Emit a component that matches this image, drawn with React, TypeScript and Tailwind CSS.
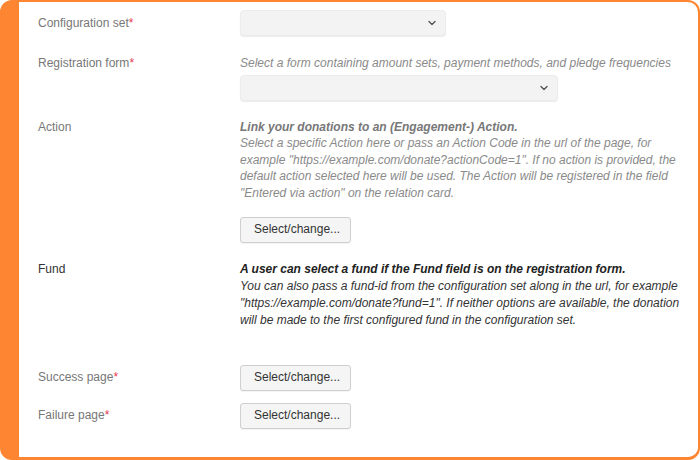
const Req = () => <span className="text-[#e8394f]">*</span>;

const Chevron = () => (
  <svg width="10" height="10" viewBox="0 0 10 10" fill="none" stroke="#555" strokeWidth="1.4" strokeLinecap="round" strokeLinejoin="round">
    <path d="M2 3.5 5 6.5 8 3.5" />
  </svg>
);

const Select = ({ width }: { width: string }) => (
  <div className={`${width} h-[26px] flex items-center justify-end pr-[8px] bg-[#f3f3f3] border border-[#ececec] rounded-[4px] shadow-[0_1px_1px_rgba(0,0,0,0.08)]`}>
    <Chevron />
  </div>
);

const Button = () => (
  <button className="w-[111px] h-[26px] bg-[#f5f5f5] border border-[#cfcfcf] rounded-[3px] text-[12px] text-[#333] text-left pl-[13px] shadow-[0_1px_1px_rgba(0,0,0,0.05)]">
    Select/change...
  </button>
);

const App = () => {
  return (
    <div className="w-[700px] h-[460px] bg-white" style={{ fontFamily: '"Liberation Sans", Arial, sans-serif' }}>
      <div className="h-full border-2 border-b-[3px] border-l-[19px] border-[#fe8632] rounded-[12px] bg-white pl-[19px] pr-[12px] pt-[8px] text-[12px] leading-[16.6px]">
        {/* Configuration set */}
        <div className="grid grid-cols-[202px_1fr] items-center">
          <div className="text-[#777]">Configuration set<Req /></div>
          <Select width="w-[206px]" />
        </div>

        {/* Registration form */}
        <div className="grid grid-cols-[202px_1fr] mt-[19px]">
          <div className="text-[#777]">Registration form<Req /></div>
          <div>
            <div className="italic text-[#8a8a8a]">Select a form containing amount sets, payment methods, and pledge frequencies</div>
            <div className="mt-[3px]">
              <Select width="w-[318px]" />
            </div>
          </div>
        </div>

        {/* Action */}
        <div className="grid grid-cols-[202px_1fr] mt-[18px]">
          <div className="text-[#777]">Action</div>
          <div>
            <div className="italic font-bold text-[#777]">Link your donations to an (Engagement-) Action.</div>
            <div className="italic text-[#8a8a8a]">
              Select a specific Action here or pass an Action Code in the url of the page, for example "https://example.com/donate?actionCode=1". If no action is provided, the default action selected here will be used. The Action will be registered in the field "Entered via action" on the relation card.
            </div>
            <div className="mt-[15px]">
              <Button />
            </div>
          </div>
        </div>

        {/* Fund */}
        <div className="grid grid-cols-[202px_1fr] mt-[18px]">
          <div className="text-[#333]">Fund</div>
          <div className="leading-[17px]">
            <div className="italic font-bold text-[#222]">A user can select a fund if the Fund field is on the registration form.</div>
            <div className="italic text-[#333]">
              You can also pass a fund-id from the configuration set along in the url, for example "https://example.com/donate?fund=1". If neither options are available, the donation will be made to the first configured fund in the configuration set.
            </div>
          </div>
        </div>

        {/* Success page */}
        <div className="grid grid-cols-[202px_1fr] items-center mt-[36px]">
          <div className="text-[#777]">Success page<Req /></div>
          <div><Button /></div>
        </div>

        {/* Failure page */}
        <div className="grid grid-cols-[202px_1fr] items-center mt-[12px]">
          <div className="text-[#777]">Failure page<Req /></div>
          <div><Button /></div>
        </div>
      </div>
    </div>
  );
};

export default App;
